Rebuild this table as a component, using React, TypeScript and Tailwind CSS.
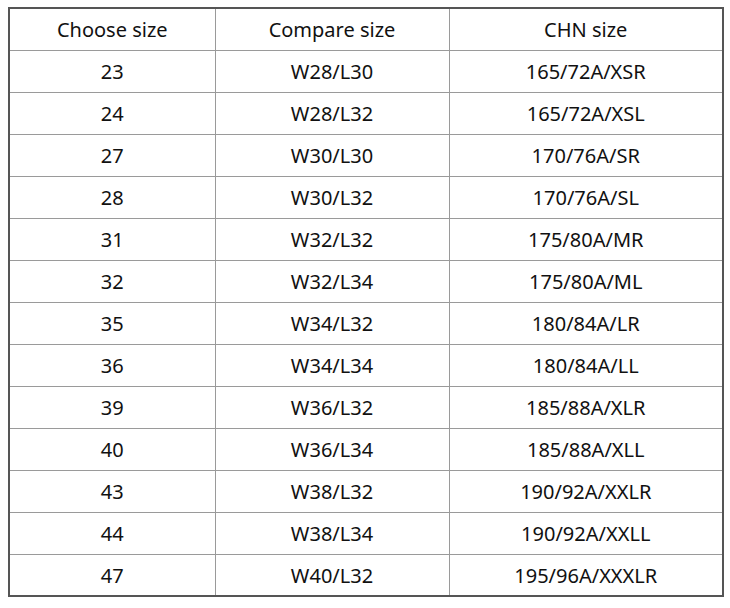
const rows: [string, string, string][] = [
  ['23', 'W28/L30', '165/72A/XSR'],
  ['24', 'W28/L32', '165/72A/XSL'],
  ['27', 'W30/L30', '170/76A/SR'],
  ['28', 'W30/L32', '170/76A/SL'],
  ['31', 'W32/L32', '175/80A/MR'],
  ['32', 'W32/L34', '175/80A/ML'],
  ['35', 'W34/L32', '180/84A/LR'],
  ['36', 'W34/L34', '180/84A/LL'],
  ['39', 'W36/L32', '185/88A/XLR'],
  ['40', 'W36/L34', '185/88A/XLL'],
  ['43', 'W38/L32', '190/92A/XXLR'],
  ['44', 'W38/L34', '190/92A/XXLL'],
  ['47', 'W40/L32', '195/96A/XXXLR'],
];

const cell = 'h-[42px] border border-[#9a9a9a] p-0 pt-[2px] text-center align-middle';

export default function App() {
  return (
    <div className="h-[608px] w-[730px] bg-white pl-2 pt-[7px] font-['Noto_Sans',sans-serif] text-[20px] text-[#111]">
      <table className="w-[714px] table-fixed border-collapse border-2 border-[#555]">
        <colgroup>
          <col className="w-[206px]" />
          <col className="w-[234px]" />
          <col className="w-[274px]" />
        </colgroup>
        <thead>
          <tr>
            <th className={`${cell} font-normal`}>Choose size</th>
            <th className={`${cell} font-normal`}>Compare size</th>
            <th className={`${cell} font-normal`}>CHN size</th>
          </tr>
        </thead>
        <tbody>
          {rows.map((r) => (
            <tr key={r[0]}>
              <td className={cell}>{r[0]}</td>
              <td className={cell}>{r[1]}</td>
              <td className={cell}>{r[2]}</td>
            </tr>
          ))}
        </tbody>
      </table>
    </div>
  );
}
